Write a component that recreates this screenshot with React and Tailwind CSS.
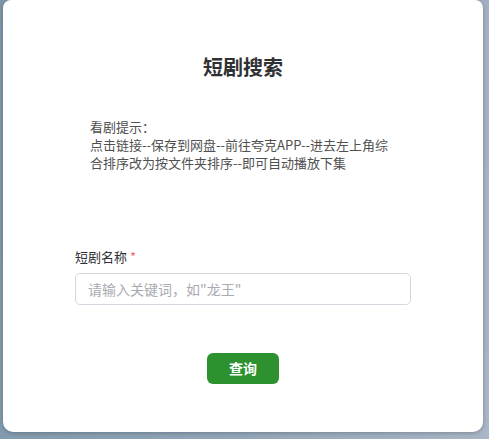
import React, { useState } from "react";

const cjk = { fontFamily: '"Noto Sans CJK SC", "Liberation Sans", sans-serif' };

const App = () => {
  const [keyword, setKeyword] = useState("");

  return (
    <div
      className="w-[489px] h-[439px] overflow-hidden bg-[linear-gradient(100deg,#7d97ab_0%,#8ea3b6_45%,#a9b6c6_100%)]"
      style={cjk}
    >
      <div className="ml-[3px] w-[480px] h-[432px] rounded-b-[10px] rounded-t-[8px] bg-white shadow-[0_1px_4px_rgba(0,0,0,0.25)] flex flex-col">
        <h1 className="pt-[53px] text-center text-[20px] leading-[28px] font-bold text-[#303133]">短剧搜索</h1>

        <div className="mt-[37px] ml-[87px] w-[306px] text-[13px] leading-[18px] text-[#505050]">
          <p>看剧提示：</p>
          <p>点击链接--保存到网盘--前往夸克APP--进去左上角综合排序改为按文件夹排序--即可自动播放下集</p>
        </div>

        <label className="mt-[76px] ml-[72px] text-[13px] leading-[18px] text-[#303133]">
          短剧名称 <span className="text-[#f56c6c]">*</span>
        </label>

        <input
          type="text"
          value={keyword}
          onChange={(e) => setKeyword(e.target.value)}
          placeholder='请输入关键词，如"龙王"'
          className="mt-[7px] ml-[72px] w-[336px] h-[32px] px-[12px] rounded-[5px] border border-[#d4d7de] text-[14px] text-[#303133] placeholder:text-[#a8abb2] outline-none"
          style={cjk}
        />

        <button
          className="mt-[48px] self-center w-[72px] h-[31px] rounded-[6px] bg-[#2c912e] text-white text-[14px] font-bold"
          style={cjk}
        >
          查询
        </button>
      </div>
    </div>
  );
};

export default App;
